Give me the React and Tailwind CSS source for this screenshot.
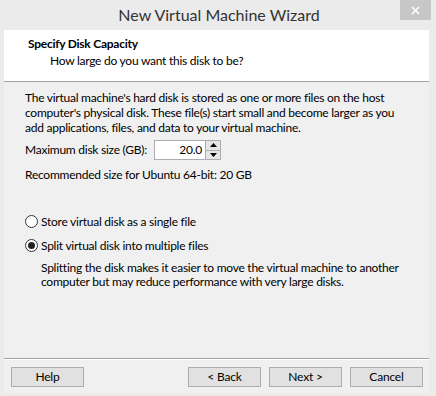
const font = { fontFamily: 'Lato, "Liberation Sans", Arial, sans-serif' };

const Radio = ({ checked, label }) => (
  <label className="flex items-center gap-[3px] h-[15px]">
    <span className="w-[13px] h-[13px] rounded-full border border-[#333333] bg-white flex items-center justify-center">
      {checked && <span className="w-[7px] h-[7px] rounded-full bg-[#222222]" />}
    </span>
    <span>{label}</span>
  </label>
);

const Button = ({ children }) => (
  <button className="w-[73px] h-[20px] border border-[#adadad] bg-[#e1e1e1] text-[12px] leading-none text-black tracking-[-0.2px]">
    {children}
  </button>
);

const App = () => {
  return (
    <div className="w-[436px] h-[396px] bg-[#ebebeb] flex flex-col overflow-hidden whitespace-nowrap" style={font}>
      {/* Title bar */}
      <div className="relative h-[30px] flex items-center justify-center">
        <span className="text-[16px] text-[#333333] pl-[2px]">New Virtual Machine Wizard</span>
        <div className="absolute left-[400px] top-0 w-[31px] h-[20px] bg-[#c7c7c7] flex items-center justify-center">
          <svg width="9" height="9" viewBox="0 0 9 9">
            <path d="M1 1 L8 8 M8 1 L1 8" stroke="white" strokeWidth="1.6" />
          </svg>
        </div>
      </div>

      <div className="ml-[4px] w-[425px] flex flex-col flex-1 tracking-[-0.25px]">
        {/* Header */}
        <div className="h-[52px] bg-white border-b border-[#a0a0a0] pl-[24px] pt-[6px] text-[12px] text-black">
          <div className="font-bold leading-[15px]">Specify Disk Capacity</div>
          <div className="pl-[22px] mt-[2px] leading-[15px]">How large do you want this disk to be?</div>
        </div>

        {/* Body */}
        <div className="bg-[#f0f0f0] flex-1 flex flex-col text-[12px] text-black">
          <div className="pl-[21px] pt-[8px] flex-1">
            <p className="leading-[15px]">
              The virtual machine's hard disk is stored as one or more files on the host
              <br />
              computer's physical disk. These file(s) start small and become larger as you
              <br />
              add applications, files, and data to your virtual machine.
            </p>

            <div className="mt-[5px] flex items-center h-[20px]">
              <span className="w-[129px]">Maximum disk size (GB):</span>
              <div className="flex h-[20px]">
                <div className="w-[51px] h-[20px] bg-white border border-[#abadb3] border-r-0 flex items-center justify-end pr-[3px]">
                  20.0
                </div>
                <div className="w-[16px] h-[20px] flex flex-col border border-[#abadb3]">
                  <div className="flex-1 bg-[#e6e6e6] border-b border-[#abadb3] flex items-center justify-center">
                    <svg width="7" height="4" viewBox="0 0 7 4"><path d="M3.5 0 L7 4 L0 4 Z" fill="black" /></svg>
                  </div>
                  <div className="flex-1 bg-[#e6e6e6] flex items-center justify-center">
                    <svg width="7" height="4" viewBox="0 0 7 4"><path d="M0 0 L7 0 L3.5 4 Z" fill="black" /></svg>
                  </div>
                </div>
              </div>
            </div>

            <div className="mt-[7px] leading-[15px]">Recommended size for Ubuntu 64-bit: 20 GB</div>

            <div className="mt-[32px] flex flex-col gap-[9px]">
              <Radio label="Store virtual disk as a single file" />
              <Radio checked label="Split virtual disk into multiple files" />
            </div>

            <p className="mt-[8px] pl-[16px] leading-[14px]">
              Splitting the disk makes it easier to move the virtual machine to another
              <br />
              computer but may reduce performance with very large disks.
            </p>
          </div>

          {/* Footer */}
          <div className="border-t border-[#a0a0a0] shadow-[inset_0_1px_0_#ffffff] h-[35px] flex items-start pt-[8px] pl-[7px] pr-[6px]">
            <Button>Help</Button>
            <div className="ml-auto flex gap-[8px]">
              <Button>&lt; Back</Button>
              <Button>Next &gt;</Button>
              <Button>Cancel</Button>
            </div>
          </div>
        </div>
      </div>
      <div className="h-[3px]" />
    </div>
  );
};

export default App;
